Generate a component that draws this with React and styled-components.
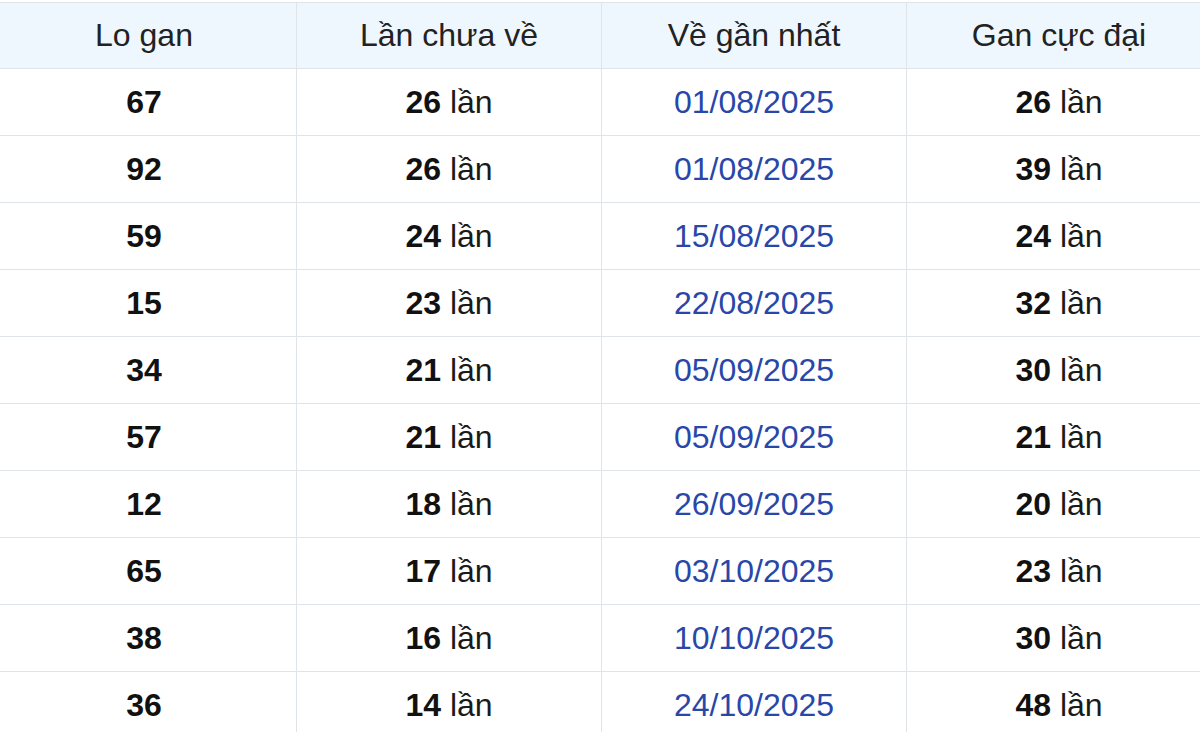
import React from 'react';
import styled, { createGlobalStyle } from 'styled-components';

const rows = [
  { lo: '67', miss: 26, last: '01/08/2025', max: 26 },
  { lo: '92', miss: 26, last: '01/08/2025', max: 39 },
  { lo: '59', miss: 24, last: '15/08/2025', max: 24 },
  { lo: '15', miss: 23, last: '22/08/2025', max: 32 },
  { lo: '34', miss: 21, last: '05/09/2025', max: 30 },
  { lo: '57', miss: 21, last: '05/09/2025', max: 21 },
  { lo: '12', miss: 18, last: '26/09/2025', max: 20 },
  { lo: '65', miss: 17, last: '03/10/2025', max: 23 },
  { lo: '38', miss: 16, last: '10/10/2025', max: 30 },
  { lo: '36', miss: 14, last: '24/10/2025', max: 48 },
];

export default function App() {
  return (
    <>
      <GlobalStyle />
      <Page>
        <Table>
          <thead>
            <tr>
              <HeadCell>Lo gan</HeadCell>
              <HeadCell>Lần chưa về</HeadCell>
              <HeadCell>Về gần nhất</HeadCell>
              <HeadCell>Gan cực đại</HeadCell>
            </tr>
          </thead>
          <tbody>
            {rows.map((row, index) => (
              <Row key={index}>
                <Cell>
                  <Strong>{row.lo}</Strong>
                </Cell>
                <Cell>
                  <Strong>{row.miss}</Strong> lần
                </Cell>
                <Cell $blue>{row.last}</Cell>
                <Cell>
                  <Strong>{row.max}</Strong> lần
                </Cell>
              </Row>
            ))}
          </tbody>
        </Table>
      </Page>
    </>
  );
}

const GlobalStyle = createGlobalStyle`
  html, body {
    margin: 0;
    padding: 0;
    background: #ffffff;
    overflow: hidden;
  }
`;

const Page = styled.div`
  width: 1200px;
  height: 732px;
  overflow: hidden;
  padding-top: 2px;
  box-sizing: border-box;
`;

const Table = styled.table`
  margin-left: -9px;
  width: 1221px;
  border-collapse: collapse;
  table-layout: fixed;

  font-family: 'Liberation Sans', Arial, sans-serif;
  font-size: 32px;
`;

const HeadCell = styled.th`
  height: 65px;
  padding: 0;

  background-color: #eef7fe;
  border: 1px solid #dfe4e8;

  color: #222222;
  font-weight: normal;
  text-align: center;
`;

const Row = styled.tr`
  height: 67px;
`;

const Cell = styled.td`
  padding: 0;
  border: 1px solid #dfe4e8;

  color: ${(props) => (props.$blue ? '#2847a8' : '#1a1a1a')};
  text-align: center;
`;

const Strong = styled.b`
  color: #111111;
  font-weight: bold;
`;
